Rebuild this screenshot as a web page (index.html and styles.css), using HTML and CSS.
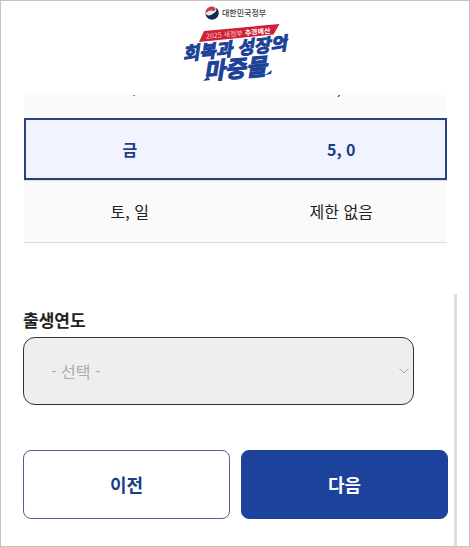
FILE: index.html
```html
<!DOCTYPE html>
<html lang="ko">
<head>
<meta charset="utf-8">
<meta name="viewport" content="width=device-width, initial-scale=1">
<title>회복과 성장의 마중물</title>
<link rel="stylesheet" href="styles.css">
</head>
<body>
<div class="page">
  <header class="header">
    <svg class="logo" width="120" height="82" viewBox="175 3 120 82" role="img" aria-label="대한민국정부 2025 새정부 추경예산 회복과 성장의 마중물">
      <g>
        <path fill="#14294f" d="M205.300 13C206 21.500 216.500 21.500 218.500 15c.9-4-.6-6.200-2.800-7.300 1.400 2.300.4 4.300-1.700 5.300-2.600 1.300-4.200 4.500-8.700 0z"/>
        <path fill="#e4e7ee" d="M205.500 12.500c.6 3.100 3.400 3.700 5.300 1.800 1.700-1.700 3.500-1.500 4.800-3.700-1.600.5-2.800-.4-4.400-.2-2.700.3-3 2.500-5.700 2.100z"/>
        <path fill="#c9404b" d="M205.300 12.500c.4-4.200 4.500-7 8.200-5.800 2.700 1 2.700 3.800.5 4.300-1.500.3-2.500-.8-4.300-.3-1.800.5-2.300 2.300-4.400 1.800z"/>
      </g>
      <text class="logo-gov" x="222" y="16">대한민국정부</text>
      <path fill="#cf2038" d="M204 31 279.500 24l-6 10.500L199 42z"/>
      <g transform="rotate(-5 238 34)">
        <text class="logo-tag" x="206" y="36">2025 새정부 <tspan class="logo-tag-strong">추경예산</tspan></text>
      </g>
      <path fill="#1b4296" d="M281 39 289 38.500 285 44zM203 81l5-5 2 4zM265 75l6-1 1-4z"/>
      <g transform="rotate(-6 235 55)">
        <text class="logo-title" x="183" y="55">회복과 성장의</text>
      </g>
      <g transform="rotate(-5 237 76)">
        <text class="logo-title logo-title-big" x="204" y="77">마중물</text>
      </g>
    </svg>
  </header>

  <main class="content">
    <div class="table-view">
      <table class="schedule">
        <tbody>
          <tr><td>목</td><td>4, 9</td></tr>
          <tr class="today"><td>금</td><td>5, 0</td></tr>
          <tr><td>토, 일</td><td>제한 없음</td></tr>
        </tbody>
      </table>
    </div>

    <form class="form">
      <label class="label" for="birth-year">출생연도</label>
      <div class="select-box">
        <select class="select" id="birth-year" disabled>
          <option>- 선택 -</option>
        </select>
        <svg class="chevron" width="10" height="6" viewBox="0 0 10 6" aria-hidden="true"><path d="M.5.5 5 5 9.500.5"/></svg>
      </div>
      <div class="actions">
        <button class="button" type="button">이전</button>
        <button class="button button-primary" type="button">다음</button>
      </div>
    </form>
  </main>
</div>
</body>
</html>
```
FILE: styles.css
```css
* {
  box-sizing: border-box;
}

body {
  margin: 0;
  background: #fff;
  color: #222;
  font-family: "Noto Sans CJK KR", sans-serif;
  font-size: 16px;
}

.page {
  display: flex;
  flex-direction: column;
  min-height: 100vh;
  border: 1px solid #c4c4c4;
}

.header {
  display: flex;
  justify-content: center;
  padding: 2px 0 10px;
}

.logo {
  display: block;
}

.logo-gov {
  fill: #444;
  font-size: 8px;
  font-weight: 500;
}

.logo-tag {
  fill: #f6c3cb;
  font-size: 7px;
}

.logo-tag-strong {
  fill: #fff;
  font-weight: 700;
}

.logo-title {
  fill: #1b4296;
  stroke: #1b4296;
  stroke-width: 1px;
  font-size: 18px;
  font-style: italic;
  font-weight: 700;
}

.logo-title-big {
  font-size: 23px;
}

.content {
  display: flex;
  flex: 1;
  flex-direction: column;
}

.table-view {
  margin: 0 22px 0 23px;
  overflow: hidden;
}

.schedule {
  width: 100%;
  margin-top: -39px;
  border-collapse: collapse;
  table-layout: fixed;
  background: #fafafa;
}

.schedule td {
  height: 62px;
  padding: 0;
  border-bottom: 1px solid #ddd;
  text-align: center;
}

.schedule .today {
  background: #f1f4fe;
  color: #1c3f87;
  font-weight: 700;
  outline: 2px solid #27427d;
  outline-offset: -2px;
}

.form {
  display: flex;
  flex: 1;
  flex-direction: column;
  margin: 51px 12px 0 0;
  padding: 14px 6px 26px 22px;
  border-right: 3px solid #ddd;
}

.label {
  margin-bottom: 5px;
  font-size: 17px;
  font-weight: 700;
  line-height: 24px;
}

.select-box {
  position: relative;
  width: 92%;
}

.select {
  display: block;
  width: 100%;
  height: 68px;
  padding: 0 27px;
  border: 1px solid #333;
  border-radius: 12px;
  background: #eee;
  color: #aaa;
  font: inherit;
  opacity: 1;
  appearance: none;
}

.chevron {
  position: absolute;
  top: 31px;
  right: 5px;
  fill: none;
  stroke: #aaa;
}

.actions {
  display: grid;
  grid-template-columns: 1fr 1fr;
  gap: 11px;
  margin-top: 45px;
}

.button {
  height: 69px;
  padding: 0;
  border: 1px solid #4c6390;
  border-radius: 8px;
  background: #fff;
  color: #1c3f87;
  font: inherit;
  font-size: 18px;
  font-weight: 700;
}

.button-primary {
  border-color: #1c429b;
  background: #1c429b;
  color: #fff;
}
```
